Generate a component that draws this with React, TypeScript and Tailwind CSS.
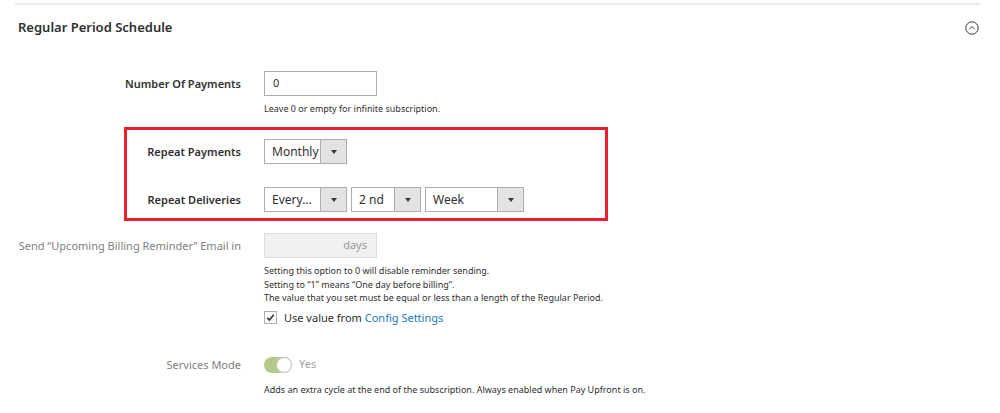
import * as React from 'react'

function Select({ value, width }: { value: string; width: number }) {
  return (
    <div className="flex h-[25px] border border-[#adadad] bg-white text-[12px] text-[#303030]" style={{ width }}>
      <span className="flex flex-1 items-center pl-[7px]">{value}</span>
      <span className="flex w-[26px] items-center justify-center border-l border-[#adadad] bg-[#e3e3e3]">
        <span className="h-0 w-0 border-x-[3px] border-t-[4px] border-x-transparent border-t-[#41362f]" />
      </span>
    </div>
  )
}

function Row({ label, muted, children }: { label: string; muted?: boolean; children: React.ReactNode }) {
  return (
    <div className="flex gap-[23px]">
      <div
        className={
          'w-[241px] shrink-0 whitespace-nowrap pt-[5px] text-right text-[11px] ' +
          (muted ? 'text-[#808080]' : 'font-semibold text-[#303030]')
        }
      >
        {label}
      </div>
      <div className="flex-1">{children}</div>
    </div>
  )
}

const help = 'mt-[6px] text-[9px] leading-[13.5px] text-[#303030]'

export default function App() {
  return (
    <div className="h-[413px] w-[1000px] bg-white pt-[3px] font-['Open_Sans',sans-serif]">
      <div className="mx-[15px] w-[965px] border-t-2 border-[#ebebeb]" />
      <div className="flex items-center justify-between pl-[18px] pr-[21px] pt-[13px]">
        <h2 className="text-[13px] font-semibold text-[#303030]">Regular Period Schedule</h2>
        <svg width="14" height="14" viewBox="0 0 14 14" fill="none" stroke="#41362f" strokeWidth="1">
          <circle cx="7" cy="7" r="6.2" />
          <path d="M4.3 8.2 7 5.5l2.7 2.7" />
        </svg>
      </div>

      <div className="mt-[33px]">
        <Row label="Number Of Payments">
          <div className="flex h-[25px] w-[113px] items-center border border-[#adadad] pl-[8px] text-[11px] text-[#303030]">0</div>
          <p className={help}>Leave 0 or empty for infinite subscription.</p>
        </Row>

        <div className="ml-[124px] mt-[12px] w-[484px] border-[3px] border-[#e9202d] pb-[6px] pt-[9px]">
          <div className="-ml-[127px]">
            <Row label="Repeat Payments">
              <Select value="Monthly" width={83} />
            </Row>
            <div className="mt-[23px]">
              <Row label="Repeat Deliveries">
                <div className="flex gap-[4px]">
                  <Select value="Every..." width={83} />
                  <Select value="2 nd" width={70} />
                  <Select value="Week" width={99} />
                </div>
              </Row>
            </div>
          </div>
        </div>

        <div className="mt-[12px]">
          <Row label="Send “Upcoming Billing Reminder” Email in" muted>
            <div className="flex h-[25px] w-[113px] items-center justify-end border border-[#dcdcdc] bg-[#f0f0f0] pr-[9px] text-[11px] text-[#9a9a9a]">days</div>
            <div className={help}>
              <p>Setting this option to 0 will disable reminder sending.</p>
              <p>Setting to “1” means “One day before billing”.</p>
              <p>The value that you set must be equal or less than a length of the Regular Period.</p>
            </div>
            <label className="mt-[5px] flex items-center gap-[7px] text-[11px] text-[#303030]">
              <span className="flex h-[13px] w-[13px] items-center justify-center border border-[#adadad] bg-white">
                <svg width="9" height="9" viewBox="0 0 9 9" fill="none" stroke="#303030" strokeWidth="1.6">
                  <path d="M1.2 4.8 3.4 7 7.8 1.8" />
                </svg>
              </span>
              <span>
                Use value from <span className="text-[#1979c3]">Config Settings</span>
              </span>
            </label>
          </Row>
        </div>

        <div className="mt-[26px]">
          <Row label="Services Mode" muted>
            <div className="flex h-[25px] items-center gap-[7px]">
              <span className="relative h-[16px] w-[28px] rounded-full bg-[#b5c98a]">
                <span className="absolute right-0 top-0 h-[16px] w-[16px] rounded-full border border-[#c5c5c5] bg-white" />
              </span>
              <span className="text-[11px] text-[#a0a0a0]">Yes</span>
            </div>
            <p className={help + ' mt-[5px]'}>Adds an extra cycle at the end of the subscription. Always enabled when Pay Upfront is on.</p>
          </Row>
        </div>
      </div>
    </div>
  )
}
